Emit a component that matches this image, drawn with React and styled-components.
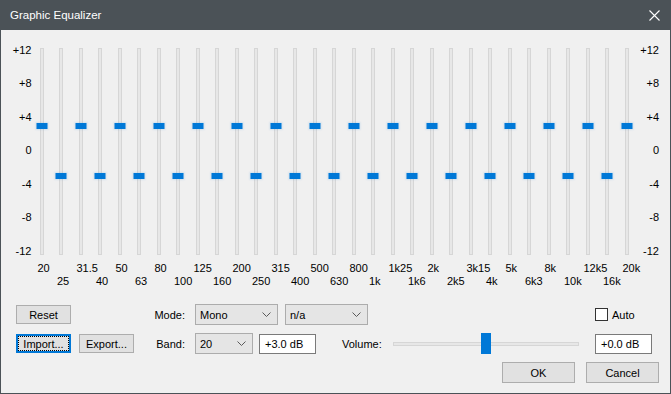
import styled, { createGlobalStyle } from 'styled-components';

const GlobalStyle = createGlobalStyle`
  html, body {
    margin: 0;
    padding: 0;
    background: #f0f0f0;
  }
  body {
    font-family: "Liberation Sans", Arial, sans-serif;
    font-size: 11px;
    color: #000;
  }
`;

const freqs = [
    '20', '25', '31.5', '40', '50', '63', '80', '100', '125', '160', '200',
    '250', '315', '400', '500', '630', '800', '1k', '1k25', '1k6', '2k',
    '2k5', '3k15', '4k', '5k', '6k3', '8k', '10k', '12k5', '16k', '20k'
];

const bands = freqs.map((label, i) => ({ label, gain: i % 2 === 0 ? 3 : -3 }));

const scale = ['+12', '+8', '+4', '0', '-4', '-8', '-12'];

const Window = styled.div`
    width: 671px;
    height: 394px;
    box-sizing: border-box;
    display: flex;
    flex-direction: column;
    background: #f0f0f0;
    border: 1px solid #4b5257;
    border-top: none;
`;

const TitleBar = styled.div`
    height: 30px;
    flex-shrink: 0;
    display: flex;
    align-items: center;
    justify-content: space-between;
    padding: 0 10px 0 9px;
    background: #4b5257;
    color: #fff;
    font-size: 11.5px;
`;

const EqSection = styled.div`
    display: flex;
    align-items: flex-start;
    padding-top: 18px;
`;

const Scale = styled.div`
    width: ${props => props.$width}px;
    height: 214px;
    margin-top: -4.5px;
    display: flex;
    flex-direction: column;
    justify-content: space-between;
    align-items: flex-end;
    line-height: 13px;
    white-space: nowrap;
`;

const Bands = styled.div`
    display: grid;
    grid-template-columns: repeat(31, 19.5px);
    margin-left: 6px;
`;

const BandColumn = styled.div`
    display: flex;
    flex-direction: column;
`;

const Track = styled.div`
    position: relative;
    width: 4px;
    height: 207px;
    margin-left: 2px;
    box-sizing: border-box;
    background: #e7e7e7;
    border: 1px solid #d6d6d6;
`;

const Thumb = styled.div`
    position: absolute;
    left: 50%;
    top: ${props => 102 - props.$gain * 8.4 - 3}px;
    width: 11px;
    height: 6px;
    transform: translateX(-50%);
    background: #0078d7;
    box-shadow: 0 0 2px 1px rgba(0, 120, 215, 0.12);
`;

const FreqLabel = styled.div`
    margin-top: ${props => props.$low ? 19.5 : 6.5}px;
    line-height: 13px;
    white-space: nowrap;
`;

const Panel = styled.div`
    display: flex;
    flex-direction: column;
    gap: 8px;
    margin-top: 16.5px;
    padding: 0 11px 0 15px;
`;

const Row = styled.div`
    display: flex;
    align-items: center;
    height: 21px;
    justify-content: ${props => props.$end ? 'flex-end' : 'flex-start'};
`;

const ButtonGroup = styled.div`
    width: 118px;
    display: flex;
    gap: 8px;
`;

const Button = styled.div`
    width: ${props => props.$width || 55}px;
    height: ${props => props.$height || 19}px;
    margin-left: ${props => props.$gap || 0}px;
    box-sizing: border-box;
    display: flex;
    align-items: center;
    justify-content: center;
    background: #e1e1e1;
    border: ${props => props.$focused ? '2px solid #0078d7' : '1px solid #adadad'};
    outline: ${props => props.$focused ? '1px dotted #000' : 'none'};
    outline-offset: -3px;
    cursor: default;
`;

const FieldLabel = styled.div`
    width: ${props => props.$width || 51}px;
    margin-left: ${props => props.$gap || 0}px;
    text-align: ${props => props.$left ? 'left' : 'right'};
    white-space: nowrap;
`;

const Select = styled.div`
    width: ${props => props.$width}px;
    height: 21px;
    margin-left: ${props => props.$gap}px;
    box-sizing: border-box;
    display: flex;
    align-items: center;
    justify-content: space-between;
    padding: 0 6px 0 4px;
    background: #e5e5e5;
    border: 1px solid #acacac;
`;

const TextBox = styled.div`
    width: 57px;
    height: 20px;
    margin-left: ${props => props.$auto ? 'auto' : `${props.$gap}px`};
    margin-right: ${props => props.$right || 0}px;
    box-sizing: border-box;
    display: flex;
    align-items: center;
    padding-left: 5px;
    background: #fff;
    border: 1px solid #7a7a7a;
`;

const AutoBox = styled.div`
    width: 57px;
    margin-left: auto;
    margin-right: 7px;
    display: flex;
    align-items: center;
    gap: 4px;
`;

const Checkbox = styled.div`
    width: 13px;
    height: 13px;
    box-sizing: border-box;
    background: #fff;
    border: 1px solid #333;
`;

const Slider = styled.div`
    position: relative;
    width: 186px;
    height: 21px;
    margin-left: 14px;
    display: flex;
    align-items: center;
`;

const SliderTrack = styled.div`
    width: 100%;
    height: 4px;
    box-sizing: border-box;
    background: #e7e7e7;
    border: 1px solid #d6d6d6;
`;

const SliderThumb = styled.div`
    position: absolute;
    top: 0;
    left: calc(${props => props.$value * 100}% - 5px);
    width: 10px;
    height: 21px;
    background: #0078d7;
`;

const Chevron = () => (
    <svg width="9" height="5" viewBox="0 0 9 5">
        <polyline points="0.5,0.5 4.5,4.5 8.5,0.5" fill="none" stroke="#5a5a5a" strokeWidth="1" />
    </svg>
);

const CloseIcon = () => (
    <svg width="11" height="11" viewBox="0 0 11 11">
        <path d="M0.5 0.5 L10.5 10.5 M10.5 0.5 L0.5 10.5" stroke="#fff" strokeWidth="1.1" />
    </svg>
);

export default () => (
    <>
    <GlobalStyle />
    <Window>
        <TitleBar>
            <span>Graphic Equalizer</span>
            <CloseIcon />
        </TitleBar>
        <EqSection>
            <Scale $width={30.5}>
                { scale.map(s => <span key={s}>{s}</span>) }
            </Scale>
            <Bands>
                { bands.map((band, i) =>
                    <BandColumn key={band.label}>
                        <Track>
                            <Thumb $gain={band.gain} />
                        </Track>
                        <FreqLabel $low={i % 2 === 1}>{band.label}</FreqLabel>
                    </BandColumn>
                )}
            </Bands>
            <Scale $width={17}>
                { scale.map(s => <span key={s}>{s}</span>) }
            </Scale>
        </EqSection>
        <Panel>
            <Row>
                <ButtonGroup>
                    <Button>Reset</Button>
                </ButtonGroup>
                <FieldLabel>Mode:</FieldLabel>
                <Select $width={83} $gap={10}><span>Mono</span><Chevron /></Select>
                <Select $width={83} $gap={7}><span>n/a</span><Chevron /></Select>
                <AutoBox>
                    <Checkbox />
                    <span>Auto</span>
                </AutoBox>
            </Row>
            <Row>
                <ButtonGroup>
                    <Button $focused>Import...</Button>
                    <Button>Export...</Button>
                </ButtonGroup>
                <FieldLabel>Band:</FieldLabel>
                <Select $width={58} $gap={10}><span>20</span><Chevron /></Select>
                <TextBox $gap={6}>+3.0 dB</TextBox>
                <FieldLabel $left $width={37} $gap={26}>Volume:</FieldLabel>
                <Slider>
                    <SliderTrack />
                    <SliderThumb $value={0.5} />
                </Slider>
                <TextBox $auto $right={7}>+0.0 dB</TextBox>
            </Row>
            <Row $end>
                <Button $width={73} $height={21}>OK</Button>
                <Button $width={73} $height={21} $gap={11}>Cancel</Button>
            </Row>
        </Panel>
    </Window>
    </>
);
